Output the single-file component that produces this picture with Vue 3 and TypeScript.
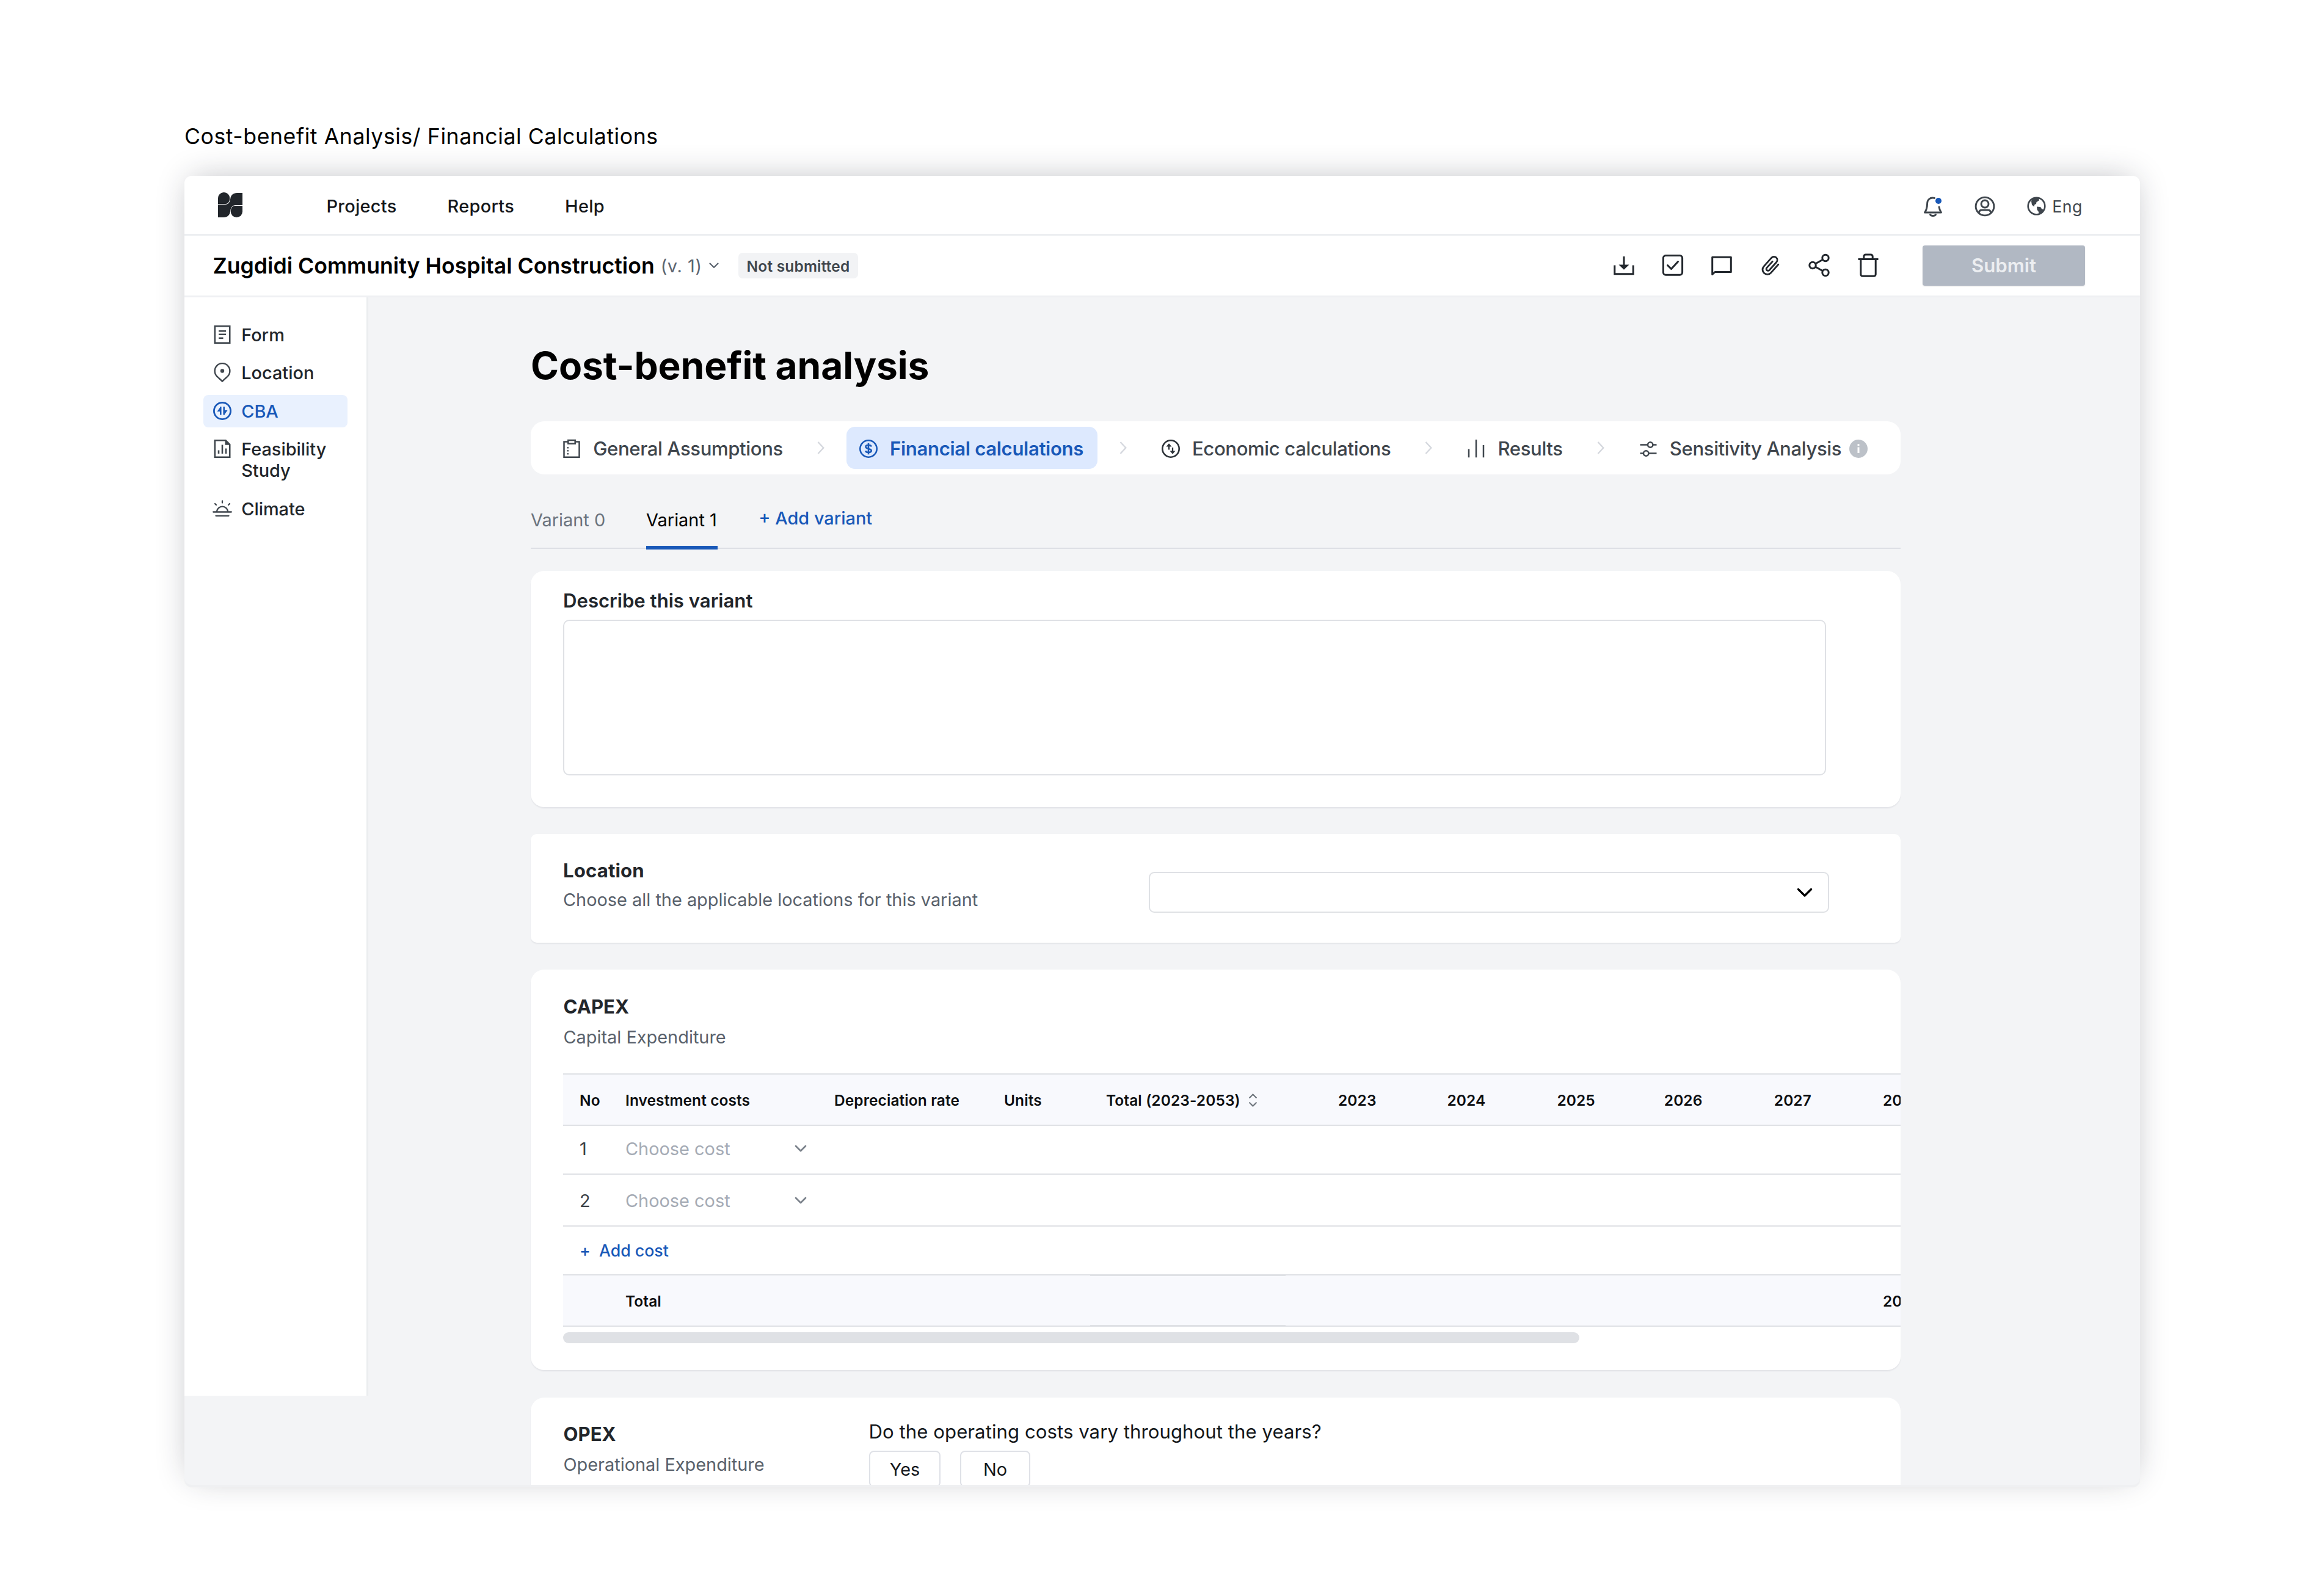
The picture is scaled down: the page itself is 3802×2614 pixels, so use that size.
<script setup lang="ts">
const menu: string[] = ['Projects', 'Reports', 'Help']

const sections = [
  { id: 'form', label: 'Form' },
  { id: 'location', label: 'Location' },
  { id: 'cba', label: 'CBA' },
  { id: 'study', label: 'Feasibility Study' },
  { id: 'climate', label: 'Climate' },
]

const steps = [
  { id: 'general', label: 'General Assumptions' },
  { id: 'financial', label: 'Financial calculations' },
  { id: 'economic', label: 'Economic calculations' },
  { id: 'results', label: 'Results' },
  { id: 'sensitivity', label: 'Sensitivity Analysis' },
]

const years: number[] = [2023, 2024, 2025, 2026, 2027, 2028]
const costRows: number[] = [1, 2]
</script>

<template>
  <div class="page">
    <p class="caption">Cost-benefit Analysis/ Financial Calculations</p>

    <div class="window">
      <header class="topbar">
        <svg class="logo" width="40" height="41" viewBox="0 0 40 41" fill="#22262b">
          <path d="M0 19V9.6a9.6 9.6 0 0 1 19.2 0V11c-.6 4.600-3 8-7 8z" />
          <path d="M40 22v9.400a9.600 9.600 0 0 1-19.200 0V30c.6-4.600 3-8 7-8z" />
          <path d="M40 1v20H28.500c-5 0-7.700 4-8.300 9.500C19.500 37 15.500 41 9 41H0V20h12c5 0 7.600-4 8.200-9.500C21 4.500 25 1 31 1z" />
        </svg>
        <nav class="menu">
          <a v-for="m in menu" :key="m">{{ m }}</a>
        </nav>
        <div class="account">
          <svg width="32" height="34" viewBox="0 0 32 34" fill="none" stroke="#3f464d" stroke-width="2.900">
            <path d="M18.500 3.400C11 1.500 6.600 6.500 6.600 12.500c0 7-1.600 11-4.100 14.500h27c-1.600-2.200-2.900-5-3.500-9" stroke-linejoin="round" stroke-linecap="round" />
            <path d="M11.500 30.500c1.500 2.700 7.500 2.700 9 0" stroke-linecap="round" />
            <circle cx="25" cy="8" r="5" fill="#1858b8" stroke="none" />
          </svg>
          <svg width="34" height="34" viewBox="0 0 34 34" fill="none" stroke="#3f464d" stroke-width="2.900">
            <circle cx="17" cy="17" r="14.900" />
            <circle cx="17" cy="13" r="6" />
            <path d="M7.500 27.500c0-3.500 2.500-4.500 5-4.500h9c2.500 0 5 1 5 4.500" />
          </svg>
          <span class="lang">
            <svg width="31" height="31" viewBox="0 0 31 31">
              <circle cx="15.500" cy="15.500" r="13.800" fill="none" stroke="#3f464d" stroke-width="2.600" />
              <path fill="#3f464d" d="M8 3.500 20 2l-.5 4.500-4 2.500-.5 3-2.500 1-1 3.500-3.500-3L7 8z" />
              <path fill="#3f464d" d="m16 16.500 6 .500 2 3 3.500 1.500-2 4.500-6 3.500-.5-4.500-2.500-3.500z" />
            </svg>
            Eng
          </span>
        </div>
      </header>

      <div class="projectbar">
        <h2>Zugdidi Community Hospital Construction</h2>
        <span class="version">(v. 1)</span>
        <svg class="version-arrow" width="16" height="10" viewBox="0 0 16 10" fill="none" stroke="#5c6570" stroke-width="2.200" stroke-linecap="round" stroke-linejoin="round">
          <path d="m1.500 1.500 6.500 6.500 6.500-6.500" />
        </svg>
        <span class="badge">Not submitted</span>

        <div class="actions">
          <svg viewBox="0 0 40 40" fill="none" stroke="#22272d" stroke-width="3">
            <path d="M4.800 19.500v14.200h30.400V19.500M20 5v16" />
            <path d="M11.500 18.500h17L20 26.800z" fill="#22272d" stroke="none" />
          </svg>
          <svg viewBox="0 0 40 40" fill="none" stroke="#22272d" stroke-width="3">
            <rect x="4.400" y="3.600" width="31.200" height="31.600" rx="4" />
            <path d="m11.500 19.500 6 6L28.500 13.500" stroke-linecap="round" stroke-linejoin="round" />
          </svg>
          <svg viewBox="0 0 40 40" fill="none" stroke="#22272d" stroke-width="3" stroke-linejoin="round">
            <path d="M4.700 34.500V6.200h30.600v24.300H9z" />
          </svg>
          <svg viewBox="0 0 24 24" fill="none" stroke="#22272d" stroke-width="1.700" stroke-linecap="round" stroke-linejoin="round">
            <path d="m20.300 10.700-7.300 8.200a4.700 4.700 0 0 1-6.700.3 4.700 4.700 0 0 1-.3-6.600l7.600-8.500a3.300 3.300 0 0 1 4.600-.2 3.300 3.300 0 0 1 .2 4.600l-7 7.800a1.700 1.700 0 0 1-2.400.1 1.700 1.700 0 0 1-.1-2.400l5.600-6.200" transform="translate(-.6 .2)" />
          </svg>
          <svg viewBox="0 0 40 40" fill="none" stroke="#22272d" stroke-width="3">
            <circle cx="30" cy="7.500" r="5.200" />
            <circle cx="9" cy="19.500" r="5.200" />
            <circle cx="30" cy="31.500" r="5.200" />
            <path d="m13.500 17 12-6.800M13.500 22l12 6.800" />
          </svg>
          <svg viewBox="0 0 40 40" fill="none" stroke="#22272d" stroke-width="3">
            <path d="M3.500 9.400h33M7.800 9.400v24.800a3 3 0 0 0 3 3h18.400a3 3 0 0 0 3-3V9.400" />
            <path d="M12.800 9V5a3 3 0 0 1 3-3h8.400a3 3 0 0 1 3 3v4" />
          </svg>
        </div>
        <button class="submit">Submit</button>
      </div>

      <div class="body">
        <aside class="sidebar">
          <a v-for="s in sections" :key="s.id" class="side-item" :class="{ active: s.id === 'cba' }">
            <svg v-if="s.id === 'form'" viewBox="0 0 32 32" fill="none" stroke="#3f464d" stroke-width="2.600">
              <rect x="3.800" y="2.300" width="24.400" height="27.400" />
              <path d="M10 10.300h12M10 15.800h12M10 21.800h7.500" stroke-width="2.400" />
            </svg>
            <svg v-else-if="s.id === 'location'" viewBox="0 0 32 32" fill="none" stroke="#3f464d" stroke-width="2.400">
              <path d="m16 30.500-8.800-8.200A12.400 12.400 0 1 1 24.800 22.300z" />
              <circle cx="16" cy="13.500" r="3.200" fill="#3f464d" stroke="none" />
            </svg>
            <svg v-else-if="s.id === 'cba'" viewBox="0 0 32 32" fill="none" stroke="#1858b8" stroke-width="2.800">
              <circle cx="16" cy="16" r="13.600" />
              <path d="M13.300 9v13.500M18.700 9v13.500" stroke-width="2.500" />
              <path d="M12.500 10v7H7.500zM19.500 22v-7h5z" fill="#1858b8" stroke="none" />
            </svg>
            <svg v-else-if="s.id === 'study'" viewBox="0 0 32 32" fill="none" stroke="#3f464d" stroke-width="2.600">
              <path d="M3.800 2.300h17.700l6.700 6.700v20.700H3.800z" />
              <path d="M20.500 1.500v8.300h8.300z" fill="#3f464d" stroke="none" />
              <path d="M10 18.500V24M16 9.500V24M22 15.500V24" />
            </svg>
            <svg v-else viewBox="0 0 32 32" fill="none" stroke="#3f464d" stroke-width="2.300" stroke-linecap="round">
              <path d="M1.200 21.500h29.600M5.500 27.800h21M6.800 21a9.300 9.300 0 0 1 18.500 0M16 3.500v3M4 8l2 2M28 8l-2 2" />
            </svg>
            <span>{{ s.label }}</span>
          </a>
        </aside>

        <main class="main">
          <h1>Cost-benefit analysis</h1>

          <div class="stepper">
            <template v-for="(s, i) in steps" :key="s.id">
              <svg v-if="i > 0" class="sep" width="12" height="21" viewBox="0 0 12 21" fill="none" stroke="#d5d8de" stroke-width="2.400">
                <path d="m1.500 1 8.800 9.500L1.500 20" />
              </svg>
              <div class="step" :class="{ active: s.id === 'financial' }">
                <svg v-if="s.id === 'general'" viewBox="0 0 32 32" fill="none" stroke="#3f464d" stroke-width="2.500">
                  <path d="M10 4.500H3.500v25.300h25V4.500H22" />
                  <rect x="10.300" y="2" width="11.400" height="5.600" />
                  <path d="M9.800 13v12.500" stroke-width="2.200" stroke-dasharray="2.500 2.500" />
                </svg>
                <svg v-else-if="s.id === 'financial'" viewBox="0 0 32 32" fill="none" stroke="#1858b8" stroke-width="2.600">
                  <circle cx="16" cy="16" r="13.700" />
                  <path d="M20.800 12.500c-.8-3.200-9.300-3.400-9.300.3 0 4.200 9.300 2 9.300 6.300 0 3.800-8.700 3.800-9.600.3M16 6.800v18.400" />
                </svg>
                <svg v-else-if="s.id === 'economic'" viewBox="0 0 32 32" fill="none" stroke="#2c3238" stroke-width="2.600">
                  <circle cx="16" cy="16" r="13.700" />
                  <path d="M13 8.500v9M19 14v9.500" stroke-width="2.300" />
                  <path d="M8.500 12.500 13 7.200l4.500 5.300zM14.500 19.500 19 24.800l4.500-5.300z" fill="#2c3238" stroke="none" />
                </svg>
                <svg v-else-if="s.id === 'results'" viewBox="0 0 32 32" fill="none" stroke="#3f464d" stroke-width="2.500">
                  <path d="M4 16.500v13.800M16 1v29.300M28 10v20.300" />
                </svg>
                <svg v-else viewBox="0 0 32 32" fill="none" stroke="#3f464d" stroke-width="2.500">
                  <path d="M2.500 9.500H15M23.500 9.500h6M2.500 23.500H8M16.500 23.500h13" />
                  <circle cx="19.200" cy="9.500" r="4.200" />
                  <circle cx="12.200" cy="23.500" r="4.200" />
                </svg>
                <span>{{ s.label }}</span>
                <svg v-if="s.id === 'sensitivity'" class="info" viewBox="0 0 30 30">
                  <circle cx="15" cy="15" r="15" fill="#bcc1c8" />
                  <path d="M15 12.500V22M15 7.200v3" stroke="#fff" stroke-width="3" />
                </svg>
              </div>
            </template>
          </div>

          <div class="tabs">
            <a class="tab">Variant 0</a>
            <a class="tab current">Variant 1</a>
            <a class="add-variant">+ Add variant</a>
          </div>

          <section class="card describe">
            <label>Describe this variant</label>
            <div class="textarea"></div>
          </section>

          <section class="card place">
            <div>
              <h3>Location</h3>
              <p class="sub">Choose all the applicable locations for this variant</p>
            </div>
            <div class="select">
              <svg width="26" height="16" viewBox="0 0 26 16" fill="none" stroke="#000" stroke-width="3.400" stroke-linecap="round" stroke-linejoin="round">
                <path d="m2.500 2.500 10.500 10.500 10.500-10.500" />
              </svg>
            </div>
          </section>

          <section class="card capex">
            <h3>CAPEX</h3>
            <p class="sub">Capital Expenditure</p>
            <div class="table">
              <div class="row head">
                <span>No</span>
                <span>Investment costs</span>
                <span>Depreciation rate</span>
                <span>Units</span>
                <span class="sortable">
                  Total (2023-2053)
                  <svg width="15" height="22" viewBox="0 0 15 22" fill="none" stroke="#6c737b" stroke-width="2">
                    <path d="m1.500 7.500 6-6 6 6M1.500 14.500l6 6 6-6" />
                  </svg>
                </span>
                <span v-for="y in years" :key="y">{{ y }}</span>
              </div>
              <div v-for="n in costRows" :key="n" class="row cost" :class="'cost-' + n">
                <span class="num">{{ n }}</span>
                <span class="choose">
                  Choose cost
                  <svg width="20" height="13" viewBox="0 0 20 13" fill="none" stroke="#7b828b" stroke-width="2.700" stroke-linecap="round" stroke-linejoin="round">
                    <path d="m2 2 8 8 8-8" />
                  </svg>
                </span>
              </div>
              <div class="row add"><span class="plus">+</span><span>Add cost</span></div>
              <div class="row total">
                <span></span>
                <span>Total</span>
                <span></span>
                <span></span>
                <span class="total-sum"></span>
                <span class="total-years"></span>
                <span>2028</span>
              </div>
            </div>
            <div class="scrollbar"></div>
          </section>

          <section class="card opex">
            <div class="opex-title">
              <h3>OPEX</h3>
              <p class="sub">Operational Expenditure</p>
            </div>
            <div>
              <p class="question">Do the operating costs vary throughout the years?</p>
              <div class="answers">
                <button class="yes">Yes</button>
                <button class="no">No</button>
              </div>
            </div>
          </section>
        </main>
      </div>
    </div>
  </div>
</template>

<style>
body {
  margin: 0;
  background: #fff;
}
</style>

<style scoped>
* {
  box-sizing: border-box;
}
.page {
  width: 3802px;
  height: 2614px;
  padding: 201px 298px 0 302px;
  overflow: hidden;
  font-family: "Inter", sans-serif;
  color: #22262b;
}
h1, h2, h3, p {
  margin: 0;
}
button {
  font-family: inherit;
  padding: 0;
}
svg {
  display: block;
  flex: none;
}
.caption {
  font-size: 35.58px;
  line-height: 46px;
  letter-spacing: 0.58px;
  color: #000;
  margin: 0 0 41px;
}
.window {
  width: 3202px;
  height: 2144px;
  border-radius: 12px;
  background: #f3f4f6;
  display: flex;
  flex-direction: column;
  box-shadow: 0 4px 1px #eff0f2, 0 -4px 52px -12px rgba(30, 34, 50, 0.33);
  overflow: hidden;
}
.topbar {
  height: 98px;
  flex: none;
  background: #fff;
  border-bottom: 3px solid #eceef1;
  display: flex;
  align-items: center;
  padding: 4px 94px 0 55px;
}
.logo {
  position: relative;
  top: -2px;
}
.menu {
  display: flex;
  gap: 83px;
  margin-left: 137.500px;
  font-size: 28.9px;
  font-weight: 500;
  letter-spacing: 0.3px;
  color: #14171b;
}
.account {
  margin-left: auto;
  display: flex;
  align-items: center;
  gap: 52px;
}
.lang {
  display: flex;
  align-items: center;
  gap: 10.500px;
  font-size: 26.7px;
  letter-spacing: 0.5px;
  color: #3f464d;
}
.projectbar {
  height: 101px;
  flex: none;
  background: #fff;
  border-bottom: 3px solid #eff0f3;
  display: flex;
  align-items: center;
  padding: 0 90px 0 46.500px;
}
h2 {
  font-size: 35.58px;
  font-weight: 600;
  letter-spacing: 0.04px;
  color: #000;
}
.version {
  margin-left: 10px;
  font-size: 28.9px;
  letter-spacing: 0.6px;
  color: #5c6570;
}
.version-arrow {
  margin-left: 11.500px;
}
.badge {
  margin-left: 32px;
  width: 196px;
  height: 42px;
  border-radius: 7px;
  background: #f2f3f5;
  color: #3f464d;
  font-size: 24.46px;
  font-weight: 600;
  letter-spacing: 0.2px;
  line-height: 44px;
  text-align: center;
}
.actions {
  margin-left: auto;
  display: flex;
  gap: 40px;
}
.actions svg {
  width: 40px;
  height: 40px;
}
.submit {
  margin-left: 69.500px;
  width: 266px;
  height: 66px;
  border: 0;
  border-radius: 4px;
  background: #b1b8c3;
  color: #eceef1;
  font-size: 31.13px;
  font-weight: 600;
  box-shadow: 0 1px 2px rgba(0, 0, 0, 0.12);
}
.body {
  flex: 1;
  min-height: 0;
  display: flex;
  align-items: flex-start;
}
.sidebar {
  width: 301px;
  height: 1799px;
  flex: none;
  background: #fff;
  border-right: 3px solid #ebedef;
  padding: 35px 31px 0;
  display: flex;
  flex-direction: column;
  gap: 8.900px;
}
.side-item {
  display: flex;
  align-items: flex-start;
  gap: 15.200px;
  width: 236px;
  padding: 9px 8px 8.800px 15px;
  border-radius: 8px;
  font-size: 28.9px;
  font-weight: 500;
  line-height: 35.600px;
}
.side-item svg {
  width: 32px;
  height: 32px;
  margin-top: 1px;
}
.side-item.active {
  background: #e9f1fe;
  color: #1858b8;
}
.main {
  height: 1945px;
  padding: 74px 0 0 266px;
  overflow: hidden;
}
h1 {
  font-size: 62.26px;
  font-weight: 700;
  line-height: 76px;
  letter-spacing: -0.1px;
  color: #000;
  margin-bottom: 53px;
}
.stepper {
  width: 2243px;
  height: 87px;
  border-radius: 22px;
  background: #fff;
  display: flex;
  align-items: center;
  padding-left: 31px;
}
.step {
  display: flex;
  align-items: center;
  height: 69px;
  padding: 2px 23.700px 0 20px;
  font-size: 31.13px;
  font-weight: 500;
  letter-spacing: -0.39px;
  color: #3f464d;
  white-space: nowrap;
}
.step svg {
  width: 32px;
  height: 32px;
  margin-right: 19.200px;
}
.step svg.info {
  width: 30px;
  height: 30px;
  margin: 0 0 0 13px;
}
.step.active {
  background: #dde9fe;
  border-radius: 14px;
  color: #1858b8;
  font-weight: 600;
  letter-spacing: -0.34px;
  padding-right: 23px;
  margin-right: 3.500px;
}
.sep {
  margin: 0 36px 0 32.300px;
}
.tabs {
  width: 2243px;
  height: 85px;
  margin-top: 37px;
  border-bottom: 2px solid #dddfe5;
  display: flex;
  align-items: flex-start;
  font-size: 28.9px;
  line-height: 75px;
}
.tab {
  color: #6b737d;
}
.tab.current {
  height: 86px;
  margin-left: 67px;
  padding-right: 1.500px;
  border-bottom: 6px solid #1858b8;
  color: #000;
}
.add-variant {
  margin-left: 67px;
  line-height: 70px;
  font-weight: 500;
  color: #1858b8;
}
.card {
  width: 2243px;
  background: #fff;
  border-radius: 22px;
  box-shadow: 0 2px 2px rgba(30, 34, 50, 0.07);
}
.describe {
  height: 387px;
  margin-top: 36px;
  padding: 29px 0 0 53px;
}
.describe label {
  display: block;
  font-size: 31.13px;
  font-weight: 600;
  line-height: 40px;
  margin: 0 0 10.500px;
}
.textarea {
  width: 2068px;
  height: 255px;
  border: 2px solid #dfe1e5;
  border-radius: 10px;
}
h3 {
  font-size: 31.13px;
  font-weight: 700;
  line-height: 40px;
}
.sub {
  font-size: 28.9px;
  line-height: 40px;
  color: #59616b;
}
.place {
  height: 178px;
  margin-top: 44px;
  border-radius: 10px;
  padding: 40px 117.500px 0 53px;
  display: flex;
  justify-content: space-between;
}
.place h3 {
  letter-spacing: 0.15px;
}
.place .sub {
  margin-top: 7.500px;
}
.select {
  width: 1114px;
  height: 67px;
  margin-top: 22px;
  border: 2px solid #dfe1e5;
  border-radius: 9px;
  display: flex;
  align-items: center;
  justify-content: flex-end;
  padding-right: 25px;
}
.capex {
  height: 656px;
  margin-top: 44px;
  padding: 40.500px 0 0 53px;
}
.capex h3,
.capex .sub {
  padding-left: 0.500px;
}
.capex .sub {
  margin-top: 10px;
}
.table {
  margin-top: 39.500px;
  width: 2190px;
  overflow: hidden;
}
.row {
  display: grid;
  grid-template-columns: 75px 342px 278px 167px 380px 178.400px 180px 175.400px 180px 178.200px 120px;
  align-items: center;
  padding-left: 27px;
  border-bottom: 2px solid #dfe1e5;
  white-space: nowrap;
}
.head,
.total {
  background: #f8f9fd;
  font-size: 24.46px;
  font-weight: 600;
  letter-spacing: 0.11px;
  color: #0c0e11;
}
.head {
  height: 86px;
  border-top: 2px solid #dfe1e5;
  padding-top: 2px;
}
.sortable {
  display: flex;
  align-items: center;
  gap: 13.500px;
}
.cost {
  font-size: 28.9px;
}
.cost-1 {
  height: 80px;
  padding-bottom: 3px;
}
.cost-2 {
  height: 84.500px;
  padding-top: 2px;
}
.num {
  color: #3b4148;
}
.choose {
  display: flex;
  align-items: center;
  justify-content: space-between;
  padding-right: 45px;
  color: #a5abb5;
}
.add {
  height: 80px;
  display: flex;
  gap: 15px;
  font-size: 26.7px;
  font-weight: 500;
  color: #1858b8;
}
.plus {
  width: 17px;
}
.total {
  height: 84.500px;
  grid-template-rows: 82.500px;
}
.total > span {
  padding-top: 2px;
}
.total > .total-sum {
  width: 320px;
  height: 82px;
  margin-left: -26px;
  background: #f8f9fd;
  border-top: 1px solid #dfe1e5;
  border-bottom: 1px solid #dfe1e5;
}
.total-years {
  grid-column: span 5;
}
.scrollbar {
  width: 1664px;
  height: 18px;
  margin-top: 9px;
  border-radius: 9px;
  background: #dfe1e5;
}
.opex {
  height: 300px;
  margin-top: 44.500px;
  padding: 36px 0 0 53.500px;
  display: flex;
}
.opex-title {
  width: 500px;
  padding-top: 4px;
}
.opex .sub {
  margin-top: 10px;
}
.question {
  font-size: 31.13px;
  line-height: 40px;
  letter-spacing: 0.06px;
  color: #14171b;
}
.answers {
  display: flex;
  gap: 32px;
  margin: 11.500px 0 0 0.500px;
}
.answers button {
  height: 60px;
  background: #fff;
  border: 2px solid #dfe1e7;
  border-radius: 8px;
  font-size: 28.9px;
  color: #14171b;
}
.yes {
  width: 117px;
}
.no {
  width: 115px;
}
</style>
